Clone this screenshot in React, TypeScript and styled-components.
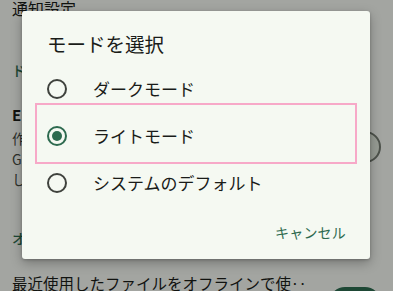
import React, { useState } from "react";
import styled, { createGlobalStyle } from "styled-components";

const GlobalStyle = createGlobalStyle`
  html, body {
    margin: 0;
    padding: 0;
  }
  body {
    width: 393px;
    height: 291px;
    overflow: hidden;
    background: #f1f4ee;
    font-family: "Noto Sans CJK JP", "Noto Sans", sans-serif;
  }
`;

const GREEN = "#2d6a4f";

const Screen = styled.div`
  position: relative;
  width: 393px;
  height: 291px;
  overflow: hidden;
  background: #f1f4ee;
`;

// settings page that sits behind the dialog
const Page = styled.div`
  display: flex;
  flex-direction: column;
  padding: 0 12px;
  color: #1a1c19;
`;

const PageTitle = styled.div`
  font-size: 16px;
  line-height: 16px;
  white-space: nowrap;
`;

const SectionHeader = styled.div<{ $gap: number }>`
  margin-top: ${({ $gap }) => $gap}px;
  font-size: 14px;
  line-height: 20px;
  font-weight: 500;
  color: ${GREEN};
  white-space: nowrap;
`;

const SettingRow = styled.div<{ $gap: number; $align?: string }>`
  margin-top: ${({ $gap }) => $gap}px;
  display: flex;
  align-items: ${({ $align }) => $align || "center"};
  justify-content: space-between;
  gap: 16px;
`;

const SettingText = styled.div`
  display: flex;
  flex-direction: column;
  min-width: 0;
`;

const SettingTitle = styled.div<{ $bold?: boolean }>`
  font-size: ${({ $bold }) => ($bold ? "15px" : "15.5px")};
  line-height: 22px;
  font-weight: ${({ $bold }) => ($bold ? 700 : 400)};
  white-space: nowrap;
`;

const SettingDesc = styled.div`
  margin-top: 2px;
  font-size: 14px;
  line-height: 20.5px;
  color: #43483f;
`;

const Switch = styled.div<{ $on?: boolean; $offset?: number }>`
  flex: none;
  width: 52px;
  height: 32px;
  box-sizing: border-box;
  margin-top: ${({ $offset }) => $offset || 0}px;
  border-radius: 16px;
  border: 2px solid ${({ $on }) => ($on ? GREEN : "#72796f")};
  background: ${({ $on }) => ($on ? GREEN : "#dee5d9")};
`;

const Scrim = styled.div`
  position: absolute;
  inset: 0;
  background: rgba(0, 0, 0, 0.32);
`;

// modal dialog
const Dialog = styled.div`
  position: absolute;
  left: 22px;
  top: 11px;
  width: 348px;
  height: 248px;
  box-sizing: border-box;
  display: flex;
  flex-direction: column;
  background: #f5f9f2;
  border-radius: 3px;
  box-shadow: 0 4px 12px rgba(0, 0, 0, 0.28), 0 1px 3px rgba(0, 0, 0, 0.2);
  color: #1a1c19;
`;

const DialogTitle = styled.div`
  padding: 23px 25px 0;
  font-size: 19.5px;
  line-height: 20px;
`;

const OptionList = styled.div`
  margin-top: 11px;
  display: flex;
  flex-direction: column;
`;

const Option = styled.label`
  height: 47px;
  display: flex;
  align-items: center;
  gap: 26px;
  padding-left: 25px;
  cursor: pointer;
`;

const Radio = styled.span<{ $checked: boolean }>`
  flex: none;
  width: 20px;
  height: 20px;
  box-sizing: border-box;
  border-radius: 50%;
  border: 2px solid ${({ $checked }) => ($checked ? GREEN : "#3f423d")};
  display: flex;
  align-items: center;
  justify-content: center;

  &::after {
    content: "";
    width: 10px;
    height: 10px;
    border-radius: 50%;
    background: ${GREEN};
    display: ${({ $checked }) => ($checked ? "block" : "none")};
  }
`;

const OptionLabel = styled.span`
  font-size: 17px;
  line-height: 24px;
  white-space: nowrap;
`;

const Footer = styled.div`
  margin-top: 8px;
  display: flex;
  justify-content: flex-end;
  padding-right: 12px;
`;

const TextButton = styled.button`
  height: 36px;
  padding: 0 12px;
  border: none;
  background: transparent;
  font-family: inherit;
  font-size: 14px;
  font-weight: 400;
  letter-spacing: 0.2px;
  color: ${GREEN};
  cursor: pointer;
`;

const Highlight = styled.div`
  position: absolute;
  left: 35px;
  top: 103px;
  width: 322px;
  height: 61px;
  box-sizing: border-box;
  border: 2px solid #f7a9c8;
  pointer-events: none;
`;

const modes = ["ダークモード", "ライトモード", "システムのデフォルト"];

export default function App() {
  const [mode, setMode] = useState(1);

  return (
    <Screen>
      <GlobalStyle />
      <Page>
        <PageTitle>通知設定</PageTitle>
        <SectionHeader $gap={44}>ドキュメント</SectionHeader>
        <SettingRow $gap={24}>
          <SettingText>
            <SettingTitle $bold>Eメール通知</SettingTitle>
            <SettingDesc>
              作成したファイルへのコメントなど
              <br />
              Google ドキュメントからの通知を
              <br />
              しらせます
            </SettingDesc>
          </SettingText>
          <Switch />
        </SettingRow>
        <SectionHeader $gap={38}>オフライン</SectionHeader>
        <SettingRow $gap={24} $align="flex-start">
          <SettingTitle>最近使用したファイルをオフラインで使‥</SettingTitle>
          <Switch $on $offset={15} />
        </SettingRow>
      </Page>
      <Scrim />
      <Dialog>
        <DialogTitle>モードを選択</DialogTitle>
        <OptionList>
          {modes.map((m, i) => (
            <Option key={m} onClick={() => setMode(i)}>
              <Radio $checked={mode === i} />
              <OptionLabel>{m}</OptionLabel>
            </Option>
          ))}
        </OptionList>
        <Footer>
          <TextButton>キャンセル</TextButton>
        </Footer>
      </Dialog>
      <Highlight />
    </Screen>
  );
}
